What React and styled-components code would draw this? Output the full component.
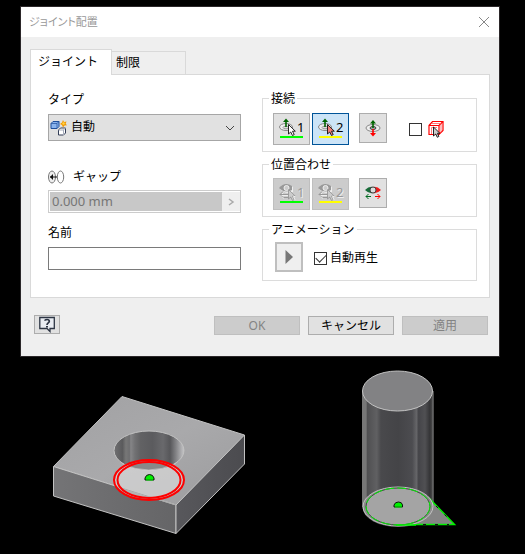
import React, { useState } from "react";
import styled, { createGlobalStyle, css } from "styled-components";

const GlobalStyle = createGlobalStyle`
  * { box-sizing: border-box; }
  body {
    margin: 0;
    background: #000;
    color: #000;
    font: 12px/16px "Noto Sans", "Noto Sans CJK JP", sans-serif;
  }
  button, input, select { font: inherit; color: inherit; }
  svg { display: block; flex: none; }
`;

const Page = styled.main`
  min-height: 100vh;
  padding-top: 6px;
`;

const Dialog = styled.section`
  margin: 0 25px 0 20px;
  border: 1px solid #2b2729;
  background: #efefef;
`;

const TitleBar = styled.header`
  display: flex;
  align-items: center;
  justify-content: space-between;
  height: 30px;
  padding: 0 9px 0 8px;
  background: #fff;
  color: #999;
`;

const Title = styled.h1`
  margin: 0;
  font-size: 11px;
  font-weight: 400;
  font-feature-settings: "palt";
`;

const CloseButton = styled.button`
  padding: 0;
  border: 0;
  background: none;
`;

const TabList = styled.div`
  display: flex;
  align-items: flex-end;
  padding: 12px 9px 0;
`;

const Tab = styled.button`
  position: relative;
  border: 1px solid #d9d9d9;
  text-align: left;
  ${(p) =>
    p.$active
      ? css`
          width: 82px;
          height: 26px;
          margin-bottom: -1px;
          padding: 0 7px 2px;
          border-bottom: 0;
          background: #fff;
        `
      : css`
          width: 74px;
          height: 23px;
          padding: 0 4px;
          border-width: 1px 1px 0 0;
          background: #efefef;
        `}
`;

const Panel = styled.div`
  display: grid;
  grid-template-columns: 193fr 215fr;
  gap: 21px;
  margin: 0 9px;
  padding: 16px 12px 11px 17px;
  border: 1px solid #d9d9d9;
  background: #fff;
`;

const Column = styled.div`
  display: flex;
  flex-direction: column;
  min-width: 0;
`;

const FieldLabel = styled.label`
  display: flex;
  align-items: center;
  gap: 8px;
  height: 16px;
  padding-top: 2px;
  margin-bottom: ${(p) => p.$space}px;
`;

const SelectBox = styled.div`
  display: grid;
  grid-template-columns: 22px 1fr 16px;
  align-items: center;
  height: 27px;
  margin-bottom: 27px;
  border: 1px solid #a6a6a6;
  background: #e1e1e1;

  > * { grid-row: 1; }
  > svg { pointer-events: none; z-index: 1; }
  > svg:first-child { grid-column: 1; margin-left: 1px; }
  > svg:last-child { grid-column: 3; }
`;

const Select = styled.select`
  grid-column: 1 / -1;
  width: 100%;
  height: 25px;
  padding: 0 20px 1px 22px;
  border: 0;
  appearance: none;
  background: transparent;
`;

const GapBox = styled.div`
  display: flex;
  height: 23px;
  margin-bottom: 11px;
  padding: 1px 0 1px 1px;
  border: 1px solid #ccc;
`;

const GapInput = styled.input`
  flex: 1;
  min-width: 0;
  padding: 0 2px 2px;
  border: 0;
  background: #c8c8c8;
  color: #767676;
  font-size: 13px;
`;

const GapButton = styled.button`
  display: grid;
  place-items: center;
  width: 18px;
  padding: 0;
  border: 0;
  background: #efefef;
`;

const NameInput = styled.input`
  width: 100%;
  height: 23px;
  padding: 0 4px;
  border: 1px solid #7a7a7a;
  background: #fff;
`;

const Group = styled.fieldset`
  display: flex;
  align-items: flex-start;
  min-width: 0;
  height: ${(p) => p.$height}px;
  margin: 0 0 5px;
  padding: ${(p) => p.$top}px 10px 0;
  border: 1px solid #dcdcdc;
`;

const Legend = styled.legend`
  height: 14px;
  margin-left: -4px;
  padding: 0 2px;
`;

const ToolButton = styled.button`
  display: grid;
  place-items: center;
  width: 28px;
  height: 30px;
  margin-left: ${(p) => p.$gap || 0}px;
  padding: 0;
  border: ${(p) => (p.$thick ? 2 : 1)}px solid ${(p) => (p.$thick ? "#bfbfbf" : "#adadad")};
  background: ${(p) => (p.$thick ? "#efefef" : "#e1e1e1")};
`;

const PickButton = styled.button`
  display: grid;
  grid-template-columns: 18px 7px;
  align-content: start;
  justify-content: center;
  width: 37px;
  height: 32px;
  margin-right: 2px;
  padding: 4px 0 0;
  border: 1px solid ${(p) => (p.$active ? "#005499" : "#adadad")};
  background: ${(p) => (p.$active ? "#cce4f7" : "#e1e1e1")};

  &:disabled {
    border-color: #bfbfbf;
    background: #ccc;
    color: #999;
    text-shadow: 1px 1px #eee;
  }
`;

const PickNumber = styled.span`
  height: 18px;
  font-size: 13px;
  line-height: 19px;
`;

const PickLine = styled.span`
  grid-column: 1 / -1;
  width: 23px;
  height: 2px;
  margin-left: 1px;
  background: ${(p) => p.$color};
`;

const CheckLabel = styled.label`
  display: flex;
  align-items: center;
  gap: ${(p) => p.$gap}px;
  height: 18px;
  margin: ${(p) => p.$top}px 0 0 ${(p) => p.$left}px;
`;

const Checkbox = styled.input`
  display: grid;
  place-items: center;
  width: 13px;
  height: 13px;
  margin: 0;
  border: 1px solid #333;
  appearance: none;
  background: #fff;

  &:checked::after {
    content: "";
    width: 9px;
    height: 5px;
    margin-top: -3px;
    border: solid #333;
    border-width: 0 0 1px 1px;
    transform: rotate(-45deg);
  }
`;

const Footer = styled.footer`
  display: flex;
  align-items: flex-start;
  gap: 8px;
  padding: 17px 11px 21px 13px;
`;

const HelpButton = styled.button`
  display: grid;
  place-items: center;
  width: 26px;
  height: 19px;
  margin-right: auto;
  padding: 0;
  border: 1px solid #adadad;
  background: #e1e1e1;
`;

const ActionButton = styled.button`
  width: 86px;
  height: 19px;
  margin-top: 1px;
  padding: 0;
  border: 1px solid #adadad;
  background: #e1e1e1;
  line-height: 17px;

  &:disabled {
    border-color: #bfbfbf;
    background: #ccc;
    color: #838383;
  }
`;

const Scene = styled.svg`
  width: 100%;
  height: auto;
`;

const Cursor = ({ fill, stroke = "#111" }) => (
  <path d="M9.5 6.5v9.500l2.200-2 1.800 3.500 1.700-.9-1.700-3.400h2.800z" fill={fill} stroke={stroke} strokeWidth=".9" />
);

const OriginIcon = ({ fill }) => (
  <svg width="18" height="18" viewBox="0 0 18 18" aria-hidden="true">
    <ellipse cx="7" cy="9" rx="6.500" ry="3.500" fill="#eee" stroke="#888" />
    <ellipse cx="7" cy="9.500" rx="3" ry="1.300" fill="#ddd" stroke="#888" strokeWidth=".8" />
    <path d="M7 3v6" stroke="#006400" strokeWidth="1.600" />
    <path d="M4 4 7 .5l3 3.500z" fill="#006400" />
    <Cursor fill={fill} />
  </svg>
);

const AlignIcon = () => (
  <svg width="18" height="18" viewBox="0 0 18 18" aria-hidden="true">
    <path d="M1 6q6-7 13-2v5q-7 3-13-3z" fill="#eee" />
    <path d="M0 5q6-7 13-2v4q-7 4-13-2z" fill="#999" />
    <circle cx="7.500" cy="5" r="2.500" fill="#ccc" stroke="#eee" />
    <path d="M1.500 12.500h13M4.500 9.500l-3 3 3 3" fill="none" stroke="#eee" />
    <path d="M1 11.500h13M4 8.500l-3 3 3 3M5 14.500h9" fill="none" stroke="#999" />
    <Cursor fill="#ccc" stroke="#999" />
    <path d="M16.500 13.500h-2l1.600 3.500" fill="none" stroke="#eee" />
  </svg>
);

const OffsetIcon = () => (
  <svg width="16" height="18" viewBox="0 0 16 18" aria-hidden="true">
    <ellipse cx="8" cy="9" rx="7" ry="3.500" fill="#eee" stroke="#888" />
    <ellipse cx="8" cy="9" rx="3" ry="1.500" fill="#aaa" stroke="#444" />
    <path d="M8 4v5" stroke="#006400" strokeWidth="1.600" />
    <path d="M5 4.500 8 1l3 3.500z" fill="#006400" />
    <path d="M8 10v5" stroke="red" strokeWidth="1.600" />
    <path d="M5 14l3 3.500 3-3.500z" fill="red" />
  </svg>
);

const FlipIcon = () => (
  <svg width="16" height="14" viewBox="0 0 16 14" aria-hidden="true">
    <path d="M0 4q4-4 8-3v6q-4 1-8-3z" fill="#176b38" />
    <path d="M16 4q-4-4-8-3v6q4 1 8-3z" fill="#f01818" />
    <circle cx="8" cy="4" r="3" fill="#ddd" stroke="#444" />
    <path d="M6 10.500H1M3.500 8 1 10.500 3.500 13" fill="none" stroke="#006b20" />
    <path d="M10 10.500h5M12.500 8l2.500 2.500-2.500 2.500" fill="none" stroke="red" />
  </svg>
);

const CubeIcon = () => (
  <svg width="16" height="18" viewBox="0 0 16 18" aria-hidden="true">
    <path d="M1 5.500 4.500 1.500H15v9l-4 4H1z" fill="#fff" stroke="red" strokeWidth="1.200" />
    <path d="M1 5.500h10v9M11 5.500l4-4" fill="none" stroke="red" strokeWidth="1.200" />
    <path d="M3 3.500h10v9M3.500 14V7.500H9" fill="none" stroke="#ff5a5a" strokeWidth=".8" />
    <path d="M5.500 7v9l2.200-2 1.600 3.300 1.600-.9-1.500-3.100h2.500z" fill="#ccc" stroke="#111" strokeWidth=".9" />
  </svg>
);

const AutoIcon = () => (
  <svg width="18" height="16" viewBox="0 0 18 16" aria-hidden="true">
    <path d="M1 3.500 3 1.500h6v5l-2 2H1z" fill="#8ab4ed" stroke="#1f4f9a" />
    <path d="M1 3.500h6v5M7 3.500l2-2" fill="none" stroke="#1f4f9a" strokeWidth=".7" />
    <path d="m8.500 10 2-2h5v5l-2 2h-5z" fill="#fff" stroke="#333d56" />
    <path d="M8.500 10h5v5M13.500 10l2-2" fill="none" stroke="#a5abba" />
    <path d="m13 0 1 2 2.500-.5-.8 2.300 1.300 1.500-2.500.2L13 7.500 12 5 10 4l2-1.500z" fill="#f39a00" />
    <circle cx="13.500" cy="3.500" r="1.200" fill="#ffd44a" />
  </svg>
);

const GapIcon = () => (
  <svg width="17" height="14" viewBox="0 0 17 14" aria-hidden="true">
    <ellipse cx="4" cy="7" rx="3.500" ry="6" fill="#eee" stroke="#777" />
    <ellipse cx="12.500" cy="7" rx="3.200" ry="6" fill="#fff" stroke="#777" />
    <path d="M2 7h7" stroke="#111" />
    <path d="M5 4 2 7l3 3z" fill="#111" />
  </svg>
);

const HelpIcon = () => (
  <svg width="16" height="17" viewBox="0 0 16 17" aria-hidden="true">
    <path d="M.8 1.500h14.500v11H11v3l-3-3H.8z" fill="#e9ecf2" stroke="#2d3544" strokeWidth="1.300" />
    <path d="M6 4.800Q6 3.500 8 3.500q2.300 0 2.300 1.700C10.300 7 8 6.800 8 9" fill="none" stroke="#2d3544" strokeWidth="1.700" />
    <path d="M7 10h2v1.500H7z" fill="#2d3544" />
  </svg>
);

const Models = () => (
  <Scene viewBox="0 357 525 197" role="img" aria-label="3D">
    <defs>
      <linearGradient id="top" x1="0" y1="0" x2="1" y2="1">
        <stop stopColor="#a1a1a3" /><stop offset=".5" stopColor="#a9a9ab" /><stop offset="1" stopColor="#9b9b9d" />
      </linearGradient>
      <linearGradient id="front">
        <stop stopColor="#747476" /><stop offset="1" stopColor="#656567" />
      </linearGradient>
      <linearGradient id="side">
        <stop stopColor="#58585c" /><stop offset="1" stopColor="#4b4b4f" />
      </linearGradient>
      <linearGradient id="hole">
        <stop stopColor="#707072" /><stop offset=".12" stopColor="#5a5a5c" /><stop offset=".17" stopColor="#777" />
        <stop offset=".22" stopColor="#6e6e70" /><stop offset=".24" stopColor="#858587" /><stop offset=".3" stopColor="#717173" />
        <stop offset=".38" stopColor="#626264" /><stop offset=".55" stopColor="#5b5b5e" /><stop offset=".7" stopColor="#69696c" />
        <stop offset=".8" stopColor="#57575a" /><stop offset=".88" stopColor="#808083" /><stop offset="1" stopColor="#c5c5c7" />
      </linearGradient>
      <linearGradient id="shaft">
        <stop stopColor="#777" /><stop offset=".05" stopColor="#777" /><stop offset=".07" stopColor="#505052" />
        <stop offset=".2" stopColor="#606062" /><stop offset=".26" stopColor="#49494c" /><stop offset=".5" stopColor="#444447" />
        <stop offset=".7" stopColor="#4c4c50" /><stop offset=".76" stopColor="#656568" /><stop offset=".79" stopColor="#454549" />
        <stop offset=".88" stopColor="#505053" /><stop offset=".95" stopColor="#343436" /><stop offset="1" stopColor="#555" />
      </linearGradient>
      <clipPath id="holeClip"><ellipse cx="149" cy="450.500" rx="35" ry="19.500" /></clipPath>
    </defs>

    <g stroke="#c2c2c2" strokeLinejoin="round">
      <path d="M122 396.500 244.500 435 176 505 53.500 466.500z" fill="url(#top)" />
      <path d="M53.500 466.500 176 505v28.500L53.500 496z" fill="url(#front)" />
      <path d="M176 505 244.500 435v29L176 533.500z" fill="url(#side)" />
      <ellipse cx="149" cy="450.500" rx="35" ry="19.500" fill="url(#hole)" />
    </g>
    <ellipse cx="149" cy="480" rx="34" ry="19" fill="#e0e0e0" fillOpacity=".62" />
    <g clipPath="url(#holeClip)">
      <ellipse cx="149" cy="480" rx="34" ry="19" fill="#888" />
    </g>
    <path d="M115 486 176 505" fill="none" stroke="#aaa" />
    <path d="M122 463.500q26 13 54 0" fill="none" stroke="#c5c5c5" strokeWidth=".7" />
    <g fill="none" stroke="red" strokeWidth="2">
      <ellipse cx="149" cy="480" rx="35" ry="20" />
      <ellipse cx="149" cy="480" rx="31.500" ry="18" />
    </g>
    <path d="M145 480v-2q1-3.500 4.500-3.500T154 478v2z" fill="#00f000" stroke="#111" />
    <path d="M146 480h7" stroke="#00f000" />

    <path d="M362.500 391v116a35.500 20 0 0 0 71 0V391z" fill="url(#shaft)" />
    <path d="M362.500 391v116M433 391v116" stroke="#777" />
    <ellipse cx="397.500" cy="391" rx="35" ry="20" fill="#828284" stroke="#c2c2c2" />
    <path d="m429 498 25.500 26.500H401z" fill="#858585" stroke="#00f000" strokeWidth="1.500" />
    <path d="m436 506 14 14M423 524.500h26" stroke="#111" strokeDasharray="3 9" />
    <ellipse cx="398" cy="506.500" rx="35" ry="19.500" fill="#8c8c8c" stroke="#c2c2c2" />
    <ellipse cx="398" cy="506.500" rx="32" ry="18.500" fill="#a4a4a4" stroke="#444" />
    <ellipse cx="398" cy="506.500" rx="32" ry="18.500" fill="none" stroke="#00f000" strokeDasharray="9 3" />
    <path d="M396 525h20" stroke="#00f000" strokeWidth="1.500" />
    <path d="M394 507v-2q1-3 4.500-3t4 3v2z" fill="#00f000" stroke="#111" />
    <path d="M395 507h7" stroke="#00f000" />
  </Scene>
);

export default function App() {
  const [tab, setTab] = useState("joint");
  const [pick, setPick] = useState(2);
  const [wholeBody, setWholeBody] = useState(false);
  const [autoPlay, setAutoPlay] = useState(true);

  return (
    <Page>
      <GlobalStyle />
      <Dialog role="dialog" aria-labelledby="dialog-title">
        <TitleBar>
          <Title id="dialog-title">ジョイント配置</Title>
          <CloseButton aria-label="閉じる">
            <svg width="12" height="12" viewBox="0 0 12 12">
              <path d="m1 1 10 10M11 1 1 11" stroke="#888" />
            </svg>
          </CloseButton>
        </TitleBar>

        <TabList role="tablist">
          <Tab role="tab" aria-selected={tab === "joint"} $active={tab === "joint"} onClick={() => setTab("joint")}>
            ジョイント
          </Tab>
          <Tab role="tab" aria-selected={tab === "limit"} $active={tab === "limit"} onClick={() => setTab("limit")}>
            制限
          </Tab>
        </TabList>

        <Panel role="tabpanel">
          <Column>
            <FieldLabel htmlFor="type" $space={7}>タイプ</FieldLabel>
            <SelectBox>
              <AutoIcon />
              <Select id="type" defaultValue="auto">
                <option value="auto">自動</option>
              </Select>
              <svg width="12" height="8" viewBox="0 0 12 8" aria-hidden="true">
                <path d="m2 2 4 4 4-4" fill="none" stroke="#444" />
              </svg>
            </SelectBox>

            <FieldLabel htmlFor="gap" $space={6}><GapIcon />ギャップ</FieldLabel>
            <GapBox>
              <GapInput id="gap" defaultValue="0.000 mm" disabled />
              <GapButton aria-label="ギャップ" disabled>
                <svg width="8" height="10" viewBox="0 0 8 10">
                  <path d="m2 2 4 3-4 3" fill="none" stroke="#aaa" strokeWidth="1.500" />
                </svg>
              </GapButton>
            </GapBox>

            <FieldLabel htmlFor="name" $space={7}>名前</FieldLabel>
            <NameInput id="name" />
          </Column>

          <Column>
            <Group $height={61} $top={8}>
              <Legend>接続</Legend>
              <PickButton aria-pressed={pick === 1} $active={pick === 1} onClick={() => setPick(1)}>
                <OriginIcon fill="#fff" />
                <PickNumber>1</PickNumber>
                <PickLine $color="#0f0" />
              </PickButton>
              <PickButton aria-pressed={pick === 2} $active={pick === 2} onClick={() => setPick(2)}>
                <OriginIcon fill="#f08078" />
                <PickNumber>2</PickNumber>
                <PickLine $color="#ff0" />
              </PickButton>
              <ToolButton aria-label="反転" $gap={8}><OffsetIcon /></ToolButton>
              <CheckLabel $gap={6} $top={7} $left={22}>
                <Checkbox
                  type="checkbox"
                  aria-label="接続"
                  checked={wholeBody}
                  onChange={(e) => setWholeBody(e.target.checked)}
                />
                <CubeIcon />
              </CheckLabel>
            </Group>

            <Group $height={60} $top={7}>
              <Legend>位置合わせ</Legend>
              <PickButton disabled>
                <AlignIcon />
                <PickNumber>1</PickNumber>
                <PickLine $color="#0f0" />
              </PickButton>
              <PickButton disabled>
                <AlignIcon />
                <PickNumber>2</PickNumber>
                <PickLine $color="#ff0" />
              </PickButton>
              <ToolButton aria-label="位置合わせ" $gap={8}><FlipIcon /></ToolButton>
            </Group>

            <Group $height={59} $top={6}>
              <Legend>アニメーション</Legend>
              <ToolButton aria-label="再生" $gap={2} $thick>
                <svg width="8" height="14" viewBox="0 0 8 14">
                  <path d="M.5 0v14L8 7z" fill="#777" />
                </svg>
              </ToolButton>
              <CheckLabel $gap={3} $top={7} $left={11}>
                <Checkbox
                  type="checkbox"
                  checked={autoPlay}
                  onChange={(e) => setAutoPlay(e.target.checked)}
                />
                自動再生
              </CheckLabel>
            </Group>
          </Column>
        </Panel>

        <Footer>
          <HelpButton aria-label="ヘルプ"><HelpIcon /></HelpButton>
          <ActionButton disabled>OK</ActionButton>
          <ActionButton>キャンセル</ActionButton>
          <ActionButton disabled>適用</ActionButton>
        </Footer>
      </Dialog>
      <Models />
    </Page>
  );
}
